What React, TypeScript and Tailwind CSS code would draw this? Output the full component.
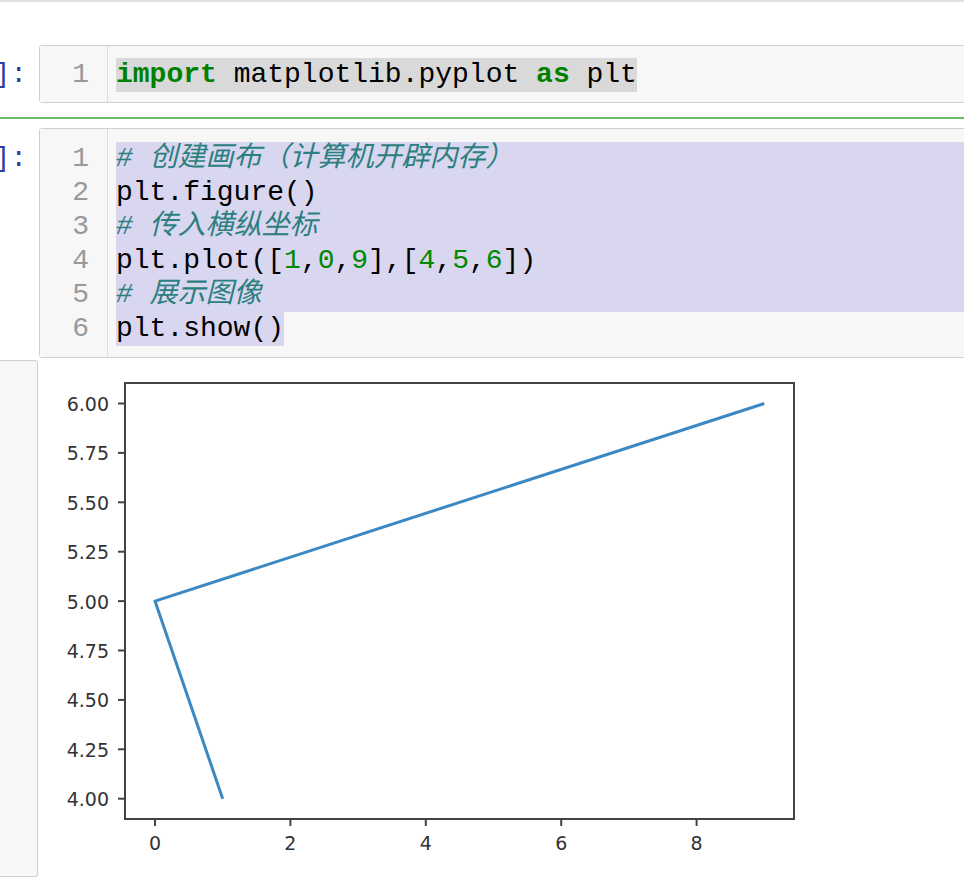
import React from 'react';

const mono = "font-['Liberation_Mono','Noto_Sans_CJK_SC',monospace]";

// one line of code, 34px tall like the notebook's editor at 2x
function Line({ children, full = true }: { children: React.ReactNode; full?: boolean }) {
  return (
    <div className="h-[34px] leading-[34px] whitespace-pre">
      <span className={full ? 'block bg-[#d9d6f0]' : 'inline-block bg-[#d9d6f0]'}>{children}</span>
    </div>
  );
}

function Comment({ text }: { text: string }) {
  return <span className="italic text-[#2b7f7f]">{text}</span>;
}

function Num({ v }: { v: string }) {
  return <span className="text-[#008800]">{v}</span>;
}

function Prompt({ top }: { top: string }) {
  return (
    <div className={`w-[39px] shrink-0 flex justify-end pr-[12px] ${top}`}>
      <span className={`${mono} text-[28px] leading-[34px] text-[#303f9f] whitespace-pre`}>]:</span>
    </div>
  );
}

function Gutter({ count, pt }: { count: number; pt: string }) {
  return (
    <div className={`w-[68px] shrink-0 border-r border-[#dddddd] bg-[#f7f7f7] ${pt}`}>
      {Array.from({ length: count }, (_, i) => (
        <div key={i} className="h-[34px] leading-[34px] text-right pr-[18px] text-[#999999]">
          {i + 1}
        </div>
      ))}
    </div>
  );
}

const yTicks = [
  ['4.00', 798.7],
  ['4.25', 749.3],
  ['4.50', 699.9],
  ['4.75', 650.5],
  ['5.00', 601.1],
  ['5.25', 551.7],
  ['5.50', 502.3],
  ['5.75', 452.9],
  ['6.00', 403.5],
] as const;

const xTicks = [
  ['0', 155],
  ['2', 290.4],
  ['4', 425.8],
  ['6', 561.2],
  ['8', 696.6],
] as const;

function Plot() {
  return (
    <svg width={926} height={517} viewBox="38 360 926 517" className="block">
      <rect x={125} y={383} width={669} height={436} fill="#ffffff" stroke="#444444" strokeWidth={2} />
      {yTicks.map(([label, y]) => (
        <g key={label}>
          <line x1={118} y1={y} x2={125} y2={y} stroke="#444444" strokeWidth={2} />
          <text
            x={109}
            y={y + 7.5}
            textAnchor="end"
            fontFamily="DejaVu Sans, sans-serif"
            fontSize={19}
            fill="#333333"
          >
            {label}
          </text>
        </g>
      ))}
      {xTicks.map(([label, x]) => (
        <g key={label}>
          <line x1={x} y1={819} x2={x} y2={826} stroke="#444444" strokeWidth={2} />
          <text
            x={x}
            y={850}
            textAnchor="middle"
            fontFamily="DejaVu Sans, sans-serif"
            fontSize={19}
            fill="#333333"
          >
            {label}
          </text>
        </g>
      ))}
      <polyline
        points="222.7,798.7 155,601.1 764.3,403.5"
        fill="none"
        stroke="#3b88c3"
        strokeWidth={3}
        strokeLinejoin="round"
      />
    </svg>
  );
}

export default function App() {
  return (
    <div className="w-[964px] h-[888px] bg-white overflow-hidden">
      <div className="h-[2px] bg-[#e0e0e0]" />

      {/* cell 1 */}
      <div className="flex items-start mt-[43px]">
        <Prompt top="pt-[13px]" />
        <div className={`flex flex-1 -mr-4 border border-[#cfcfcf] rounded-[3px] bg-[#f7f7f7] text-[28px] ${mono}`}>
          <Gutter count={1} pt="pt-[12px] pb-[10px]" />
          <div className="flex-1 pl-[8px] pt-[12px] pb-[10px]">
            <div className="h-[34px] leading-[34px] whitespace-pre">
              <span className="inline-block bg-[#d9d9d9] text-black">
                <span className="font-bold text-[#008000]">import</span> matplotlib.pyplot{' '}
                <span className="font-bold text-[#008000]">as</span> plt
              </span>
            </div>
          </div>
        </div>
      </div>

      <div className="h-[2px] bg-[#66bb6a] mt-[14px]" />

      {/* cell 2 */}
      <div className="flex items-start mt-[9px]">
        <Prompt top="pt-[14px]" />
        <div className={`flex flex-1 -mr-4 border border-[#cfcfcf] rounded-[3px] bg-[#f7f7f7] text-[28px] text-black ${mono}`}>
          <Gutter count={6} pt="pt-[13px] pb-[11px]" />
          <div className="flex-1 pl-[8px] pt-[13px] pb-[11px]">
            <Line>
              <Comment text="# 创建画布（计算机开辟内存）" />
            </Line>
            <Line>plt.figure()</Line>
            <Line>
              <Comment text="# 传入横纵坐标" />
            </Line>
            <Line>
              plt.plot([<Num v="1" />,<Num v="0" />,<Num v="9" />],[<Num v="4" />,<Num v="5" />,<Num v="6" />])
            </Line>
            <Line>
              <Comment text="# 展示图像" />
            </Line>
            <Line full={false}>plt.show()</Line>
          </div>
        </div>
      </div>

      {/* output */}
      <div className="flex mt-[2px]">
        <div className="w-[38px] h-[517px] shrink-0 bg-[#f7f7f7] border-y border-r border-[#cfcfcf] rounded-r-[3px]" />
        <Plot />
      </div>
    </div>
  );
}
